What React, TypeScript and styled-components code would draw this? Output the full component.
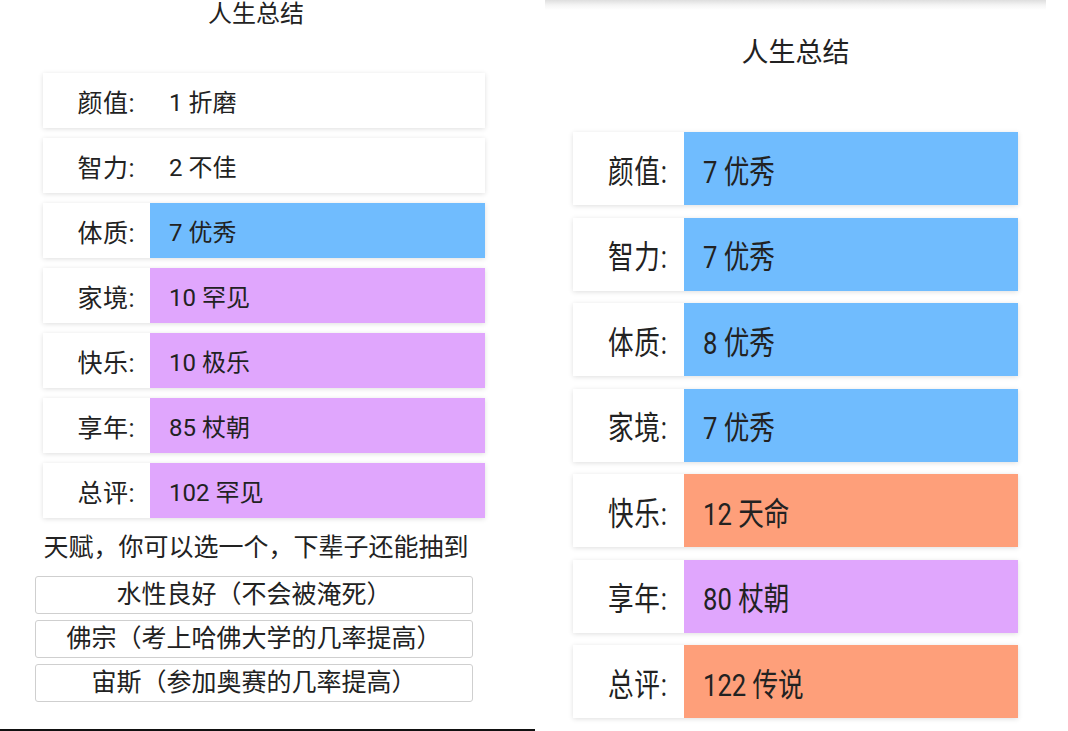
import React from 'react';
import styled, { createGlobalStyle } from 'styled-components';

const GlobalStyle = createGlobalStyle`
    html, body {
        margin: 0;
        padding: 0;
        background: #fff;
    }
    body {
        font-family: Roboto, "Noto Sans CJK SC", sans-serif;
        color: #222;
        overflow: hidden;
    }
`;

const Screen = styled.div`
    display: flex;
    width: 1068px;
    height: 731px;
`;

const LeftPanel = styled.div`
    width: 535px;
    height: 731px;
    box-sizing: border-box;
    border-bottom: 2px solid #111;
    display: flex;
    flex-direction: column;
`;

const RightPanel = styled.div`
    width: 501px;
    margin-left: 10px;
    height: 731px;
    display: flex;
    flex-direction: column;
    background: linear-gradient(#dedede 0px, #f4f4f4 5px, #fff 10px);
`;

const Title = styled.h1<{ $big?: boolean }>`
    margin: ${(p) => (p.$big ? '37px 0 63px' : '0 0 45px')};
    width: ${(p) => (p.$big ? '100%' : '512px')};
    text-align: center;
    font-weight: normal;
    font-size: ${(p) => (p.$big ? '27px' : '24px')};
    line-height: ${(p) => (p.$big ? '32px' : '28px')};
`;

const List = styled.div<{ $big?: boolean }>`
    display: flex;
    flex-direction: column;
    gap: ${(p) => (p.$big ? '12.5px' : '10px')};
    margin-left: ${(p) => (p.$big ? '28px' : '43px')};
    width: ${(p) => (p.$big ? '445px' : '442px')};
`;

const Row = styled.div<{ $big?: boolean }>`
    display: flex;
    height: ${(p) => (p.$big ? '73px' : '55px')};
    background: #fff;
    box-shadow: 0 1px 5px rgba(0, 0, 0, 0.13);
`;

const Label = styled.div<{ $big?: boolean }>`
    width: ${(p) => (p.$big ? '111px' : '107px')};
    box-sizing: border-box;
    padding-right: ${(p) => (p.$big ? '16px' : '15px')};
    display: flex;
    align-items: center;
    justify-content: flex-end;
    font-size: ${(p) => (p.$big ? '32px' : '25px')};
    letter-spacing: ${(p) => (p.$big ? '1px' : '0.5px')};
`;

const Value = styled.div<{ $bg: string; $big?: boolean }>`
    flex: 1;
    display: flex;
    align-items: center;
    padding-left: ${(p) => (p.$big ? '19px' : '19px')};
    background: ${(p) => p.$bg};
    font-size: ${(p) => (p.$big ? '32px' : '24px')};
`;

// the right screenshot is stretched tall, so its row text reads narrow
const Squeeze = styled.span<{ $big?: boolean; $right?: boolean }>`
    display: inline-block;
    white-space: nowrap;
    transform: ${(p) => (p.$big ? 'scaleX(0.8)' : 'none')};
    transform-origin: ${(p) => (p.$right ? 'right center' : 'left center')};
`;

const Hint = styled.p`
    margin: 15px 0 13px;
    width: 512px;
    text-align: center;
    font-size: 25px;
    line-height: 30px;
`;

const Choices = styled.div`
    display: flex;
    flex-direction: column;
    gap: 6px;
    margin-left: 35px;
    width: 438px;
`;

const Choice = styled.button`
    height: 38px;
    box-sizing: border-box;
    border: 1px solid #cfcfcf;
    border-radius: 3px;
    background: #fff;
    color: #222;
    font-family: Roboto, "Noto Sans CJK SC", sans-serif;
    font-size: 25px;
    line-height: 36px;
    padding: 0;
`;

const colors: Record<string, string> = {
    plain: '#fff',
    blue: '#70bcfe',
    purple: '#e0a6fd',
    orange: '#fe9f7a',
};

type Stat = { label: string; value: string; tone: string };

const leftStats: Stat[] = [
    { label: '颜值', value: '1 折磨', tone: 'plain' },
    { label: '智力', value: '2 不佳', tone: 'plain' },
    { label: '体质', value: '7 优秀', tone: 'blue' },
    { label: '家境', value: '10 罕见', tone: 'purple' },
    { label: '快乐', value: '10 极乐', tone: 'purple' },
    { label: '享年', value: '85 杖朝', tone: 'purple' },
    { label: '总评', value: '102 罕见', tone: 'purple' },
];

const rightStats: Stat[] = [
    { label: '颜值', value: '7 优秀', tone: 'blue' },
    { label: '智力', value: '7 优秀', tone: 'blue' },
    { label: '体质', value: '8 优秀', tone: 'blue' },
    { label: '家境', value: '7 优秀', tone: 'blue' },
    { label: '快乐', value: '12 天命', tone: 'orange' },
    { label: '享年', value: '80 杖朝', tone: 'purple' },
    { label: '总评', value: '122 传说', tone: 'orange' },
];

const talents = [
    '水性良好（不会被淹死）',
    '佛宗（考上哈佛大学的几率提高）',
    '宙斯（参加奥赛的几率提高）',
];

const Summary: React.FC<{ stats: Stat[]; big?: boolean }> = ({ stats, big }) => (
    <List $big={big}>
        {stats.map((s) => (
            <Row key={s.label} $big={big}>
                <Label $big={big}>
                    <Squeeze $big={big} $right>{s.label}:</Squeeze>
                </Label>
                <Value $big={big} $bg={colors[s.tone]}>
                    <Squeeze $big={big}>{s.value}</Squeeze>
                </Value>
            </Row>
        ))}
    </List>
);

export default function App() {
    return (
        <>
            <GlobalStyle />
            <Screen>
                <LeftPanel>
                    <Title>人生总结</Title>
                    <Summary stats={leftStats} />
                    <Hint>天赋，你可以选一个，下辈子还能抽到</Hint>
                    <Choices>
                        {talents.map((t) => (
                            <Choice key={t}>{t}</Choice>
                        ))}
                    </Choices>
                </LeftPanel>
                <RightPanel>
                    <Title $big>人生总结</Title>
                    <Summary stats={rightStats} big />
                </RightPanel>
            </Screen>
        </>
    );
}
